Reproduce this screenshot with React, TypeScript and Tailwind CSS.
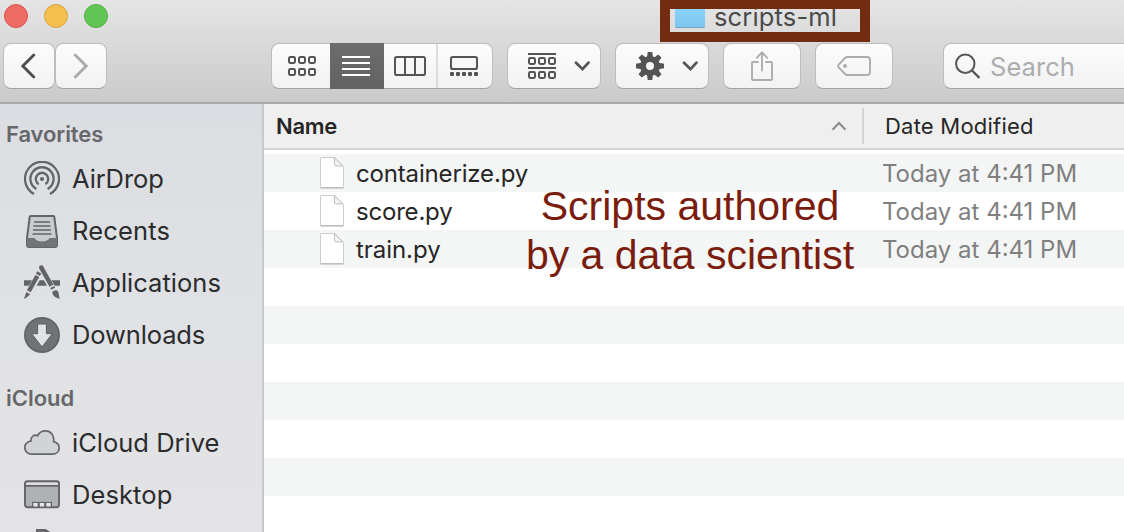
import React from "react";

const button =
  "flex h-[46px] shrink-0 items-center rounded-[8px] border border-[#bdbdbd] border-b-[#a3a3a3] bg-linear-to-b from-[#fcfcfc] to-[#f2f2f2]";
const label = "whitespace-nowrap leading-none";

function SquareRow({ y }: { y: number }) {
  return (
    <>
      {[1, 11, 21].map((x) => (
        <rect key={x} x={x} y={y} width="6" height="6" rx="1.4" />
      ))}
    </>
  );
}

function IconViewIcon() {
  return (
    <svg width="28" height="20" viewBox="0 0 28 20" fill="none" stroke="#545454" strokeWidth="2">
      <SquareRow y={1} />
      <SquareRow y={13} />
    </svg>
  );
}

function ListViewIcon() {
  return (
    <svg width="28" height="20" viewBox="0 0 28 20" fill="#fff">
      {[0, 6, 12, 18].map((y) => (
        <rect key={y} y={y} width="28" height="2" />
      ))}
    </svg>
  );
}

function ColumnViewIcon() {
  return (
    <svg width="32" height="20" viewBox="0 0 32 20" fill="none" stroke="#545454" strokeWidth="2">
      <rect x="1" y="1" width="30" height="18" rx="1.8" />
      <path d="M11 1v18M21 1v18" />
    </svg>
  );
}

function GalleryViewIcon() {
  return (
    <svg width="28" height="20" viewBox="0 0 28 20" fill="none">
      <rect x="1" y="1" width="26" height="12" rx="1.8" stroke="#545454" strokeWidth="2" />
      {[0, 6, 12, 18, 24].map((x) => (
        <rect key={x} x={x} y="16" width="4" height="4" rx="1" fill="#545454" />
      ))}
    </svg>
  );
}

function GroupIcon() {
  return (
    <svg width="28" height="26" viewBox="0 0 28 26" fill="none" stroke="#545454" strokeWidth="2">
      <path d="M0 1h28M0 15h28" />
      <SquareRow y={5} />
      <SquareRow y={19} />
    </svg>
  );
}

function GearIcon() {
  return (
    <svg width="28" height="28" viewBox="-14 -14 28 28">
      <g fill="#545454">
        {[0, 45, 90, 135, 180, 225, 270, 315].map((a) => (
          <path key={a} d="M-3.2-7L-2.4-13.4Q-2.3-14-1.7-14H1.7Q2.3-14 2.4-13.4L3.2-7Z" transform={`rotate(${a})`} />
        ))}
      </g>
      <circle r="7" fill="none" stroke="#545454" strokeWidth="6" />
    </svg>
  );
}

function DownChevron() {
  return (
    <svg width="16" height="10" viewBox="0 0 16 10" fill="none" stroke="#545454" strokeWidth="2.7" strokeLinecap="round">
      <path d="M2 1.7L8.5 8.1l6-6.4" />
    </svg>
  );
}

function ShareIcon() {
  return (
    <svg width="22" height="30" viewBox="0 0 22 30" fill="none" stroke="#adadad" strokeWidth="1.9" strokeLinecap="round">
      <path d="M7 11H2Q1 11 1 12V28Q1 29 2 29H20Q21 29 21 28V12Q21 11 20 11H15" />
      <path d="M11 19.5V1.4M5.8 6.8L11 1.4l5.2 5.4" />
    </svg>
  );
}

function TagIcon() {
  return (
    <svg width="34" height="20" viewBox="0 0 34 20" fill="none" stroke="#adadad" strokeWidth="1.9">
      <path d="M10.5 1H30Q33 1 33 4V16Q33 19 30 19H10.5Q9 19 8 18L1.7 11.4Q.6 10 1.7 8.6L8 2Q9 1 10.5 1Z" />
      <circle cx="8" cy="10" r="2" fill="#adadad" stroke="none" />
    </svg>
  );
}

function SearchIcon() {
  return (
    <svg width="26" height="26" viewBox="0 0 26 26" fill="none" stroke="#545454" strokeWidth="2">
      <circle cx="10.3" cy="10.8" r="9.2" />
      <path d="M17 17.5l7.4 7.4" strokeWidth="2.3" />
    </svg>
  );
}

function AirDropIcon() {
  return (
    <svg width="36" height="36" viewBox="0 0 36 36" fill="none" stroke="#636466" strokeWidth="2.3">
      <circle cx="18" cy="18" r="2.1" fill="#636466" stroke="none" />
      <path d="M14.7 23.2A6.2 6.2 0 1 1 21.3 23.2" />
      <path d="M12.4 28A11.6 11.6 0 1 1 23.6 28" />
      <path d="M10 32.9A17 17 0 1 1 26 32.9" />
    </svg>
  );
}

function RecentsIcon() {
  return (
    <svg width="36" height="36" viewBox="0 0 36 36">
      <path d="M6.2 3H29.8L33 25V34H3V25Z" fill="#c9cbcd" />
      <path d="M6.7 3H29.3Q30.2 3 30.3 3.9L33 25V32Q33 34 31 34H5Q3 34 3 32V25L5.7 3.9Q5.8 3 6.7 3Z" fill="none" stroke="#636466" strokeWidth="2" />
      <path d="M10 9h16M9.4 13h17.2M9 17h18M8.5 21h19" stroke="#636466" strokeWidth="1.6" />
      <path d="M3 25H10.5C12 29.5 24 29.5 25.5 25H33V33Q33 34 31 34H5Q3 34 3 33Z" fill="#737476" />
    </svg>
  );
}

function ApplicationsIcon() {
  return (
    <svg width="36" height="36" viewBox="0 0 36 36">
      <path d="M0 15.2H36V20.8H0Z" fill="#636466" />
      <path d="M15.5 8.7L3.5 30.3" stroke="#e0e1e4" strokeWidth="6.6" />
      <path d="M17.2 3.5L31 28.3" stroke="#e0e1e4" strokeWidth="6.6" />
      <path d="M15.3 7.4L13.9 9.9" stroke="#636466" strokeWidth="4.4" />
      <path d="M13.3 11L4.8 26.2" stroke="#636466" strokeWidth="4.4" />
      <path d="M2.3 26.9L6.3 29.2L1.3 33.6Q.2 34 .3 32.8Z" fill="#636466" />
      <path d="M17.3 2.6L27.4 20.6" stroke="#636466" strokeWidth="4.4" />
      <circle cx="17.3" cy="2.5" r="2.3" fill="#636466" />
      <path d="M28.2 22L29.2 23.8" stroke="#636466" strokeWidth="4.4" />
      <path d="M28.2 27.4C29.6 24.7 33.3 24.4 34.4 27.2C35.2 29.2 34.8 31.5 35.8 33.6C32.2 33.3 28.8 31 28.2 27.4Z" fill="#636466" />
    </svg>
  );
}

function DownloadsIcon() {
  return (
    <svg width="36" height="36" viewBox="0 0 36 36">
      <circle cx="18" cy="18" r="18" fill="#636466" />
      <circle cx="18" cy="18" r="16.2" fill="#717274" />
      <path d="M13.6 7H22.4V16.7H28.3L18 30 7.7 16.7H13.6Z" fill="#e2e3e5" stroke="#5d5e60" strokeWidth="1" />
    </svg>
  );
}

function CloudIcon() {
  return (
    <svg width="36" height="36" viewBox="0 0 36 36">
      <path
        d="M8 29.2H28.5C32.3 29.2 35.2 26.7 35.2 23C35.2 20 33 17.4 29.6 16.6C30.6 10.6 26.9 5.8 21.6 5.8C17.8 5.8 14.9 7.8 13.6 10.8C10.2 9 6.4 11.6 7.1 16C3 16.8.8 19.4.8 22.6C.8 26.4 4 29.2 8 29.2Z"
        fill="#d2d3d5"
        stroke="#66676a"
        strokeWidth="1.7"
        strokeLinejoin="round"
      />
    </svg>
  );
}

function DesktopIcon() {
  return (
    <svg width="36" height="36" viewBox="0 0 36 36">
      <rect x="1" y="4.2" width="34" height="26" rx="2.5" fill="#afb1b3" />
      <path d="M2 5H34V9H2Z" fill="#dcdddf" />
      <rect x="1" y="4.2" width="34" height="26" rx="2.5" fill="none" stroke="#636466" strokeWidth="1.9" />
      <path d="M1 8.9H35" stroke="#636466" strokeWidth="1.8" />
      <path d="M8 24.9H28V30H8Z" fill="#636466" />
      <path d="M9.3 26h4.4v3.6H9.3zM15.8 26h4.4v3.6h-4.4zM22.3 26h4.4v3.6h-4.4z" fill="#e6e7e9" />
    </svg>
  );
}

function DocumentsIcon() {
  return (
    <svg width="36" height="36" viewBox="0 0 36 36" fill="none" stroke="#636466" strokeWidth="2">
      <path d="M13 34V1.5H21L29 9V34Z" fill="#cfd0d2" />
      <path d="M12 1.3H21L27 5" strokeWidth="2.8" />
    </svg>
  );
}

function FileIcon() {
  return (
    <svg className="shrink-0" width="26" height="34" viewBox="0 0 26 34">
      <path d="M1.5 2.1Q1.5 1.5 2.3 1.5H15.7L24.5 10.5V31.1Q24.5 31.9 23.7 31.9H2.3Q1.5 31.9 1.5 31.1Z" fill="#fff" stroke="#cbcbcb" strokeWidth="1" />
      <path d="M1.5 31.8H24.5" stroke="#b5b5b5" strokeWidth="1.2" />
      <path d="M15.4 1.8V8.1Q15.4 9.9 17.2 9.9H24Z" fill="#f3f3f3" stroke="#bcbcbc" strokeWidth="1" />
    </svg>
  );
}

function SidebarItem({ icon, children }: { icon: React.ReactNode; children?: React.ReactNode }) {
  return (
    <li className="flex h-[52px] shrink-0 items-center gap-3 pl-6 text-[25.5px] text-[#2b2c2e]">
      {icon}
      {children}
    </li>
  );
}

const rowClass = "flex h-[38px] shrink-0 items-center pl-[55px] odd:bg-[#f4f5f5] even:bg-white";

const files = [
  { name: <span className="tracking-[-0.16px]">containerize.py</span>, key: "containerize" },
  { name: <span className="tracking-[-0.2px]">score.py</span>, key: "score" },
  { name: <span className="tracking-[-0.05px]">train.py</span>, key: "train" },
];

export default function App() {
  return (
    <div className="relative flex h-[532px] w-[1124px] flex-col overflow-hidden bg-white font-['Inter',sans-serif]">
      <header className="flex h-[104px] shrink-0 flex-col border-b-2 border-[#a9a9a9] bg-linear-to-b from-[#e5e5e5] to-[#cacaca]">
        <div className="flex h-[43px] shrink-0 items-start">
          <div className="flex gap-4 pt-1 pl-1">
            <i className="size-6 rounded-full border border-[#d9534b] bg-[#ed6b60]" />
            <i className="size-6 rounded-full border border-[#dba33b] bg-[#f5bf4f]" />
            <i className="size-6 rounded-full border border-[#4fae41] bg-[#62c655]" />
          </div>
          <div className="ml-[552px] flex h-[42px] w-[210px] gap-[9px] overflow-hidden border-10 border-t-9 border-[#732c10] pl-[5px]">
            <i className="h-[19px] w-[30px] rounded-b-[2px] border-b border-[#6ca4c4] bg-linear-to-b from-[#8ad2f8] to-[#7ec6f0]" />
            <span className={`${label} mt-[-5px] text-[25.5px] tracking-[0.15px] text-[#4a4a4a]`}>scripts-ml</span>
          </div>
        </div>
        <div className="flex h-[46px] shrink-0 items-start pl-[3px]">
          <div className={`${button} w-[52px] justify-center pr-0.5`}>
            <svg width="15" height="26" viewBox="0 0 15 26" fill="none" stroke="#4d4d4d" strokeWidth="2.8" strokeLinecap="round">
              <path d="M12.8 2L1.8 13l11 11" />
            </svg>
          </div>
          <div className={`${button} w-[52px] justify-center pr-0.5`}>
            <svg width="15" height="26" viewBox="0 0 15 26" fill="none" stroke="#a9a9a9" strokeWidth="2.8" strokeLinecap="round">
              <path d="M2.2 2l11 11-11 11" />
            </svg>
          </div>
          <div className={`${button} ml-[164px] w-[222px]`}>
            <div className="flex w-[58px] justify-center pl-px">
              <IconViewIcon />
            </div>
            <div className="-my-px flex h-[46px] w-[54px] items-center justify-center bg-linear-to-b from-[#6c6c6c] to-[#636363] pr-0.5">
              <ListViewIcon />
            </div>
            <div className="flex h-[44px] w-[54px] items-center justify-center border-r-2 border-[#dcdcdc]">
              <ColumnViewIcon />
            </div>
            <div className="flex flex-1 justify-center pr-0.5">
              <GalleryViewIcon />
            </div>
          </div>
          <div className={`${button} ml-[14px] w-[94px] gap-[18px] pl-5`}>
            <GroupIcon />
            <DownChevron />
          </div>
          <div className={`${button} ml-[14px] w-[94px] gap-[18px] pl-5`}>
            <GearIcon />
            <DownChevron />
          </div>
          <div className={`${button} ml-[14px] w-[78px] justify-center`}>
            <ShareIcon />
          </div>
          <div className={`${button} ml-[14px] w-[78px] justify-center`}>
            <TagIcon />
          </div>
          <div className={`${button} ml-[50px] w-[220px] gap-[9px] pl-[11px]`}>
            <SearchIcon />
            <span className={`${label} pt-0.5 text-[25.5px] tracking-[0.05px] text-[#adadad]`}>Search</span>
          </div>
        </div>
      </header>

      <div className="flex min-h-0 flex-1">
        <nav className="flex w-[264px] shrink-0 flex-col overflow-hidden border-r-2 border-[#c6c8cb] bg-linear-to-b from-[#dbdde2] via-[#e1e2e5] via-55% to-[#e3e3e5]">
          <h2 className={`${label} mt-[11px] flex h-[38px] shrink-0 items-center pl-[6px] text-[22px] font-semibold tracking-[-0.1px] text-[#66676a]`}>Favorites</h2>
          <ul className="flex shrink-0 flex-col">
            <SidebarItem icon={<AirDropIcon />}>
              <span className={`${label} tracking-[-0.1px]`}>AirDrop</span>
            </SidebarItem>
            <SidebarItem icon={<RecentsIcon />}>
              <span className={`${label} tracking-[0.15px]`}>Recents</span>
            </SidebarItem>
            <SidebarItem icon={<ApplicationsIcon />}>
              <span className={`${label} tracking-[0.02px]`}>Applications</span>
            </SidebarItem>
            <SidebarItem icon={<DownloadsIcon />}>
              <span className={`${label} tracking-[-0.12px]`}>Downloads</span>
            </SidebarItem>
          </ul>
          <h2 className={`${label} mt-[18px] flex h-[38px] shrink-0 items-center pl-[6px] text-[22px] font-semibold text-[#66676a]`}>iCloud</h2>
          <ul className="flex shrink-0 flex-col">
            <SidebarItem icon={<CloudIcon />}>
              <span className={label}>iCloud Drive</span>
            </SidebarItem>
            <SidebarItem icon={<DesktopIcon />}>
              <span className={`${label} tracking-[0.1px]`}>Desktop</span>
            </SidebarItem>
            <SidebarItem icon={<DocumentsIcon />} />
          </ul>
        </nav>

        <main className="flex min-w-0 flex-1 flex-col">
          <div className="mb-1 flex h-[46px] shrink-0 items-center border-b-2 border-[#d4d4d4] bg-[#efefef] pl-3 text-[22px] text-[#262626]">
            <span className={`${label} w-[555px] font-semibold tracking-[-0.3px]`}>Name</span>
            <svg width="16" height="10" viewBox="0 0 16 10" fill="none" stroke="#8a8a8a" strokeWidth="2">
              <path d="M1.5 8.8L8 2l6.5 6.8" />
            </svg>
            <i className="ml-[15px] h-9 w-0.5 bg-[#d4d4d4]" />
            <span className={`${label} ml-[21px] tracking-[0.22px]`}>Date Modified</span>
          </div>
          <ul className="flex shrink-0 flex-col text-[24px]">
            {files.map((f) => (
              <li key={f.key} className={rowClass}>
                <FileIcon />
                <span className={`${label} ml-[11px] w-[526px] pt-0.5 text-[#262626]`}>{f.name}</span>
                <span className={`${label} pt-0.5 text-[#808080]`}>Today at 4:41 PM</span>
              </li>
            ))}
            {[0, 1, 2, 3, 4, 5, 6].map((i) => (
              <li key={i} className={rowClass} />
            ))}
          </ul>
        </main>
      </div>

      <p className="absolute top-[182px] left-[490px] w-[400px] text-center font-['Liberation_Sans',sans-serif] text-[41px] leading-[49px] whitespace-nowrap text-[#7b1d0e]">
        Scripts authored
        <br />
        by a data scientist
      </p>
    </div>
  );
}
